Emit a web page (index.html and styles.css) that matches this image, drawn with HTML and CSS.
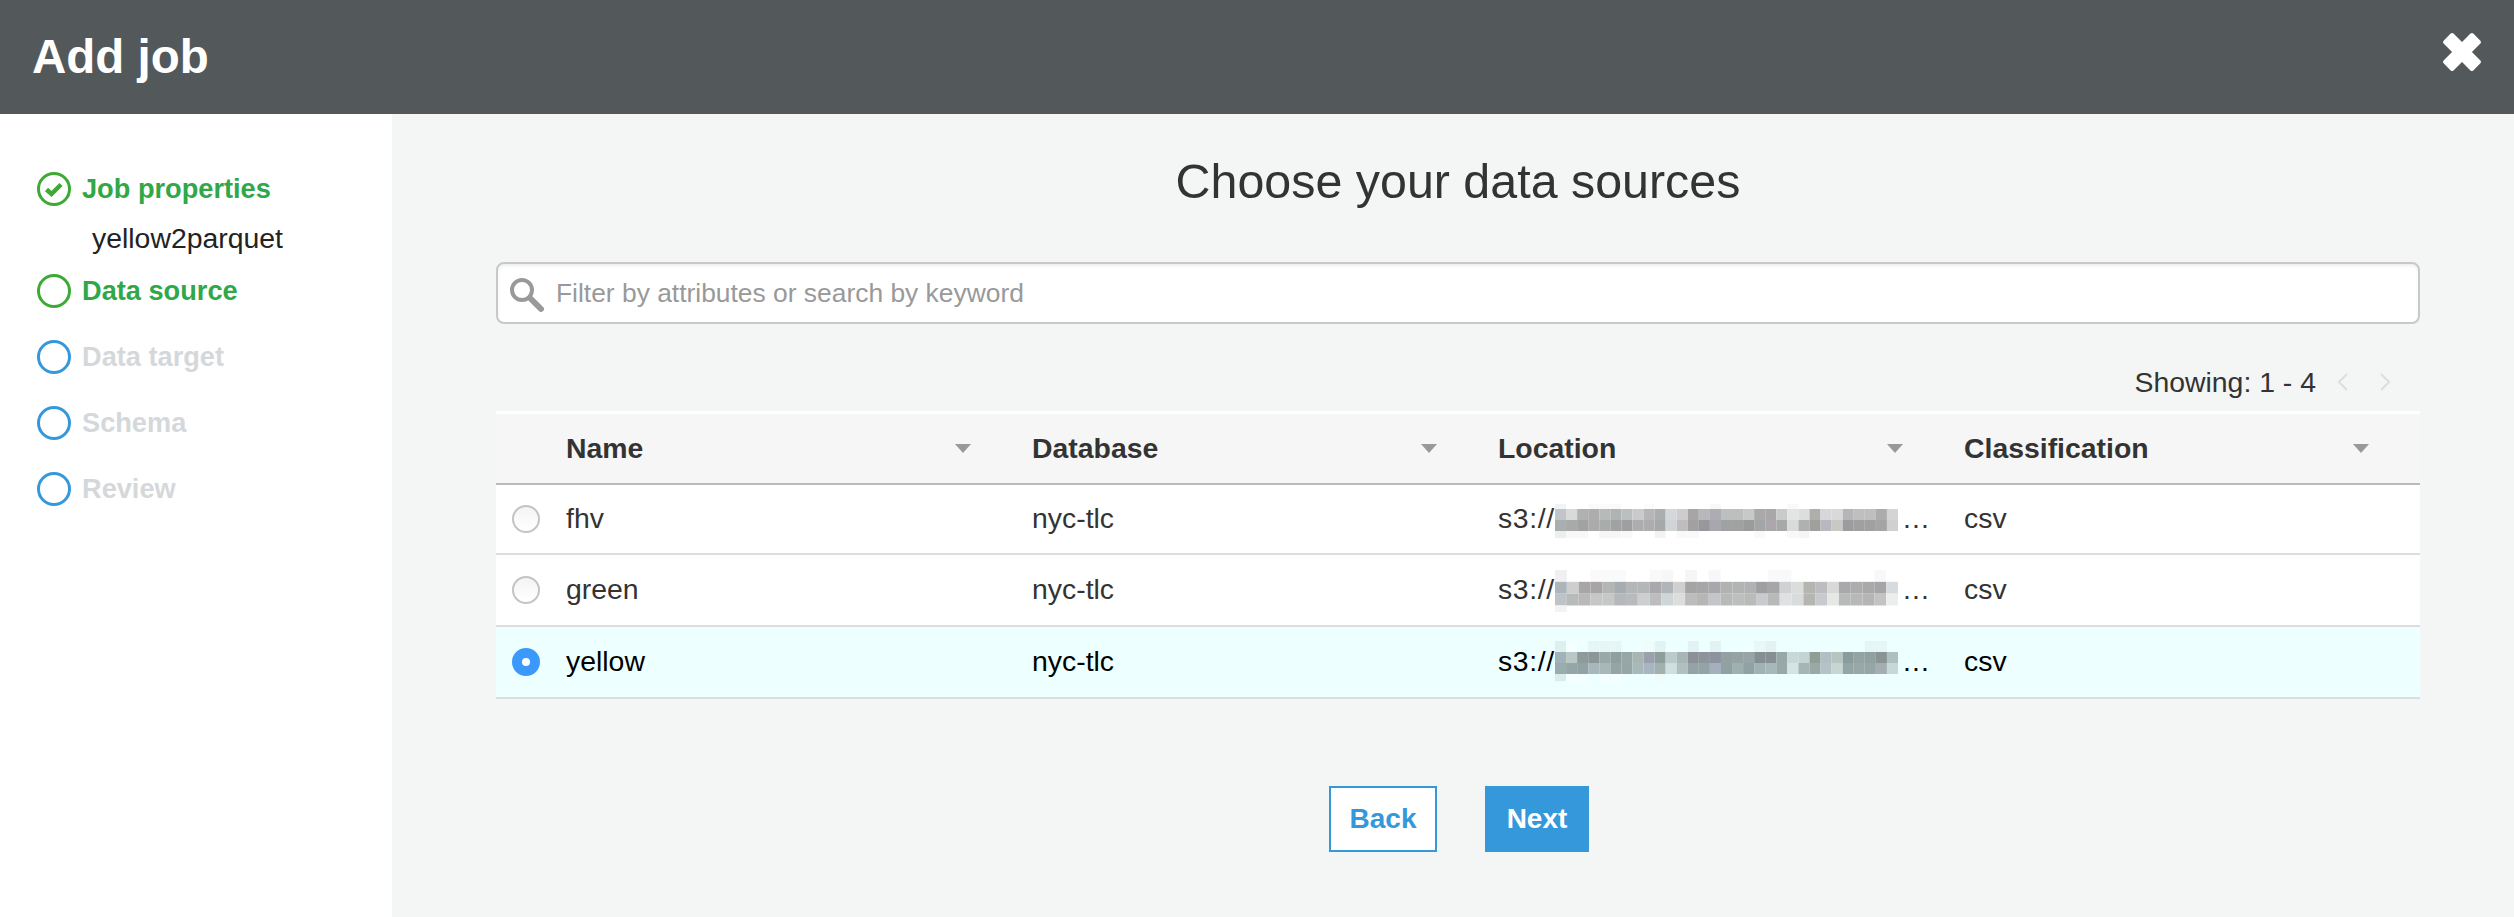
FILE: index.html
```html
<!DOCTYPE html>
<html lang="en">
<head>
    <meta charset="UTF-8">
    <title>Add job</title>
    <link rel="stylesheet" href="styles.css">
</head>
<body>

<header class="topbar">
    <h1>Add job</h1>
    <svg class="close-icon" width="38" height="38" viewBox="0 0 38 38">
        <rect x="-2" y="12" width="42" height="14" rx="2" transform="rotate(45 19 19)"/>
        <rect x="-2" y="12" width="42" height="14" rx="2" transform="rotate(-45 19 19)"/>
    </svg>
</header>

<div class="layout">
    <nav class="sidebar">
        <div class="step step-done">
            <svg class="step-icon" width="34" height="34" viewBox="0 0 34 34">
                <circle cx="17" cy="17" r="15.5"/>
                <path class="check" d="M9.5 17.5l5 4.5 9.5-9.5"/>
            </svg>
            <span class="step-name">Job properties</span>
        </div>
        <div class="step-value">yellow2parquet</div>
        <div class="step step-done">
            <svg class="step-icon" width="34" height="34" viewBox="0 0 34 34"><circle cx="17" cy="17" r="15.5"/></svg>
            <span class="step-name">Data source</span>
        </div>
        <div class="step">
            <svg class="step-icon" width="34" height="34" viewBox="0 0 34 34"><circle cx="17" cy="17" r="15.5"/></svg>
            <span class="step-name">Data target</span>
        </div>
        <div class="step">
            <svg class="step-icon" width="34" height="34" viewBox="0 0 34 34"><circle cx="17" cy="17" r="15.5"/></svg>
            <span class="step-name">Schema</span>
        </div>
        <div class="step">
            <svg class="step-icon" width="34" height="34" viewBox="0 0 34 34"><circle cx="17" cy="17" r="15.5"/></svg>
            <span class="step-name">Review</span>
        </div>
    </nav>

    <main class="content">
        <h2>Choose your data sources</h2>

        <div class="search">
            <svg class="search-icon" width="36" height="36" viewBox="0 0 36 36">
                <circle cx="13" cy="12" r="10"/>
                <path d="M21 20l11 11"/>
            </svg>
            <input type="text" placeholder="Filter by attributes or search by keyword">
        </div>

        <div class="pager">
            <span>Showing: 1 - 4</span>
            <svg class="pager-icon" width="11" height="18" viewBox="0 0 11 18"><path d="M10 1L2 9l8 8"/></svg>
            <svg class="pager-icon" width="11" height="18" viewBox="0 0 11 18"><path d="M1 1l8 8-8 8"/></svg>
        </div>

        <table class="sources">
            <thead>
                <tr>
                    <th class="col-radio"></th>
                    <th class="col-wide"><div class="head">Name<i class="sort"></i></div></th>
                    <th class="col-wide"><div class="head">Database<i class="sort"></i></div></th>
                    <th class="col-wide"><div class="head">Location<i class="sort"></i></div></th>
                    <th><div class="head">Classification<i class="sort"></i></div></th>
                </tr>
            </thead>
            <tbody>
                <tr>
                    <td><span class="radio"></span></td>
                    <td>fhv</td>
                    <td>nyc-tlc</td>
                    <td>
                        <div class="location">s3://<svg class="blur" viewBox="0 -1 31 4" width="343" height="44" preserveAspectRatio="none">
                            <rect x="0" y="-.45" fill="#f3f3f3"/><rect x="3" y="-.45" fill="#fafafa"/><rect x="4" y="-.45" fill="#fafafa"/><rect x="5" y="-.45" fill="#fafafa"/><rect x="8" y="-.45" fill="#fbfbfb"/><rect x="14" y="-.45" fill="#f8f8f8"/><rect x="21" y="-.45" fill="#f9f9f9"/>
                            <rect x="0" y="0" fill="#bfc5c8"/><rect x="1" y="0" fill="#d8d9d8"/><rect x="2" y="0" fill="#b0b1b2"/><rect x="3" y="0" fill="#aeadae"/><rect x="4" y="0" fill="#b8bab9"/><rect x="5" y="0" fill="#aeb3b4"/><rect x="6" y="0" fill="#bcbfc0"/><rect x="7" y="0" fill="#c8cacc"/><rect x="8" y="0" fill="#b6b5b7"/><rect x="9" y="0" fill="#abaeae"/><rect x="10" y="0" fill="#d3d8da"/><rect x="11" y="0" fill="#cdcdcb"/><rect x="12" y="0" fill="#a7a5a6"/><rect x="13" y="0" fill="#b8b8bb"/><rect x="14" y="0" fill="#aeacb3"/><rect x="15" y="0" fill="#bcbfbf"/><rect x="16" y="0" fill="#bdbebd"/><rect x="17" y="0" fill="#c8c8c8"/><rect x="18" y="0" fill="#a9a9aa"/><rect x="19" y="0" fill="#a8a8a8"/><rect x="20" y="0" fill="#c9cacc"/><rect x="21" y="0" fill="#e3e4e3"/><rect x="22" y="0" fill="#dcdddd"/><rect x="23" y="0" fill="#b0aeac"/><rect x="24" y="0" fill="#d7d7db"/><rect x="25" y="0" fill="#d9d9d7"/><rect x="26" y="0" fill="#b5b6b8"/><rect x="27" y="0" fill="#bfbfbf"/><rect x="28" y="0" fill="#bfbfbf"/><rect x="29" y="0" fill="#acacac"/><rect x="30" y="0" fill="#d4d4d6"/>
                            <rect x="0" y="1" fill="#a9aeb0"/><rect x="1" y="1" fill="#a8aaa9"/><rect x="2" y="1" fill="#a0a3a3"/><rect x="3" y="1" fill="#acabac"/><rect x="4" y="1" fill="#a9acab"/><rect x="5" y="1" fill="#a0a2a4"/><rect x="6" y="1" fill="#9d9fa1"/><rect x="7" y="1" fill="#adadb0"/><rect x="8" y="1" fill="#aeacae"/><rect x="9" y="1" fill="#a6a9a9"/><rect x="10" y="1" fill="#d0d4d6"/><rect x="11" y="1" fill="#bdbebd"/><rect x="12" y="1" fill="#a2a0a1"/><rect x="13" y="1" fill="#97989b"/><rect x="14" y="1" fill="#a8a6ae"/><rect x="15" y="1" fill="#9ea2a2"/><rect x="16" y="1" fill="#a0a2a0"/><rect x="17" y="1" fill="#9a9c9c"/><rect x="18" y="1" fill="#a3a5a8"/><rect x="19" y="1" fill="#aba7ab"/><rect x="20" y="1" fill="#a6a9a8"/><rect x="21" y="1" fill="#d9dada"/><rect x="22" y="1" fill="#b0b0ae"/><rect x="23" y="1" fill="#9f9f9c"/><rect x="24" y="1" fill="#b8b8c0"/><rect x="25" y="1" fill="#c8c8c4"/><rect x="26" y="1" fill="#9c9c9f"/><rect x="27" y="1" fill="#a0a0a0"/><rect x="28" y="1" fill="#a0a0a0"/><rect x="29" y="1" fill="#a5a5a5"/><rect x="30" y="1" fill="#d0d0d0"/>
                            <rect class="low" x="0" y="2" fill="#eeeeee"/><rect class="low" x="1" y="2" fill="#f8f8f8"/><rect class="low" x="2" y="2" fill="#f8f8f8"/><rect class="low" x="4" y="2" fill="#f6f6f6"/><rect class="low" x="5" y="2" fill="#f6f6f6"/><rect class="low" x="6" y="2" fill="#f8f8f8"/><rect class="low" x="9" y="2" fill="#f3f3f3"/><rect class="low" x="11" y="2" fill="#f9f9f9"/><rect class="low" x="12" y="2" fill="#f9f9f9"/><rect class="low" x="18" y="2" fill="#f9f9f9"/><rect class="low" x="21" y="2" fill="#f8f8f8"/><rect class="low" x="22" y="2" fill="#f5f5f5"/>
                        </svg><span class="dots">…</span></div>
                    </td>
                    <td>csv</td>
                </tr>
                <tr>
                    <td><span class="radio"></span></td>
                    <td>green</td>
                    <td>nyc-tlc</td>
                    <td>
                        <div class="location">s3://<svg class="blur" viewBox="0 -1 29 3.55" width="343" height="42" preserveAspectRatio="none">
                            <rect x="0" y="-1" fill="#f0f0f0"/><rect x="3" y="-1" fill="#fafafa"/><rect x="4" y="-1" fill="#fafafa"/><rect x="5" y="-1" fill="#fafafa"/><rect x="8" y="-1" fill="#f9f9f9"/><rect x="9" y="-1" fill="#f7f7f7"/><rect x="11" y="-1" fill="#f5f5f5"/><rect x="13" y="-1" fill="#f7f7f7"/><rect x="18" y="-1" fill="#f9f9f9"/><rect x="19" y="-1" fill="#f9f9f9"/><rect x="27" y="-1" fill="#f8f8f8"/>
                            <rect x="0" y="0" fill="#aeb5ba"/><rect x="1" y="0" fill="#cdcfcd"/><rect x="2" y="0" fill="#a8a6a7"/><rect x="3" y="0" fill="#a7a5a5"/><rect x="4" y="0" fill="#b3b6b5"/><rect x="5" y="0" fill="#a6adb0"/><rect x="6" y="0" fill="#b3b7b8"/><rect x="7" y="0" fill="#b5b6b8"/><rect x="8" y="0" fill="#a9a8ab"/><rect x="9" y="0" fill="#afb5b8"/><rect x="10" y="0" fill="#d0d0d0"/><rect x="11" y="0" fill="#a5a3a5"/><rect x="12" y="0" fill="#a6a5a8"/><rect x="13" y="0" fill="#a8a7ac"/><rect x="14" y="0" fill="#b1b3b3"/><rect x="15" y="0" fill="#b2b4b4"/><rect x="16" y="0" fill="#b0b2b3"/><rect x="17" y="0" fill="#9f9fa1"/><rect x="18" y="0" fill="#a5a6a8"/><rect x="19" y="0" fill="#cfd1d3"/><rect x="20" y="0" fill="#dbdddc"/><rect x="21" y="0" fill="#b3b5ae"/><rect x="22" y="0" fill="#bcbdc1"/><rect x="23" y="0" fill="#d8d9d8"/><rect x="24" y="0" fill="#a9a9ac"/><rect x="25" y="0" fill="#aeacae"/><rect x="26" y="0" fill="#aaa9aa"/><rect x="27" y="0" fill="#a5a5a7"/><rect x="28" y="0" fill="#d8dbde"/>
                            <rect x="0" y="1" fill="#bdc3c6"/><rect x="1" y="1" fill="#b8bbbb"/><rect x="2" y="1" fill="#b8b9b8"/><rect x="3" y="1" fill="#c6c7c6"/><rect x="4" y="1" fill="#c6c8c6"/><rect x="5" y="1" fill="#b5b8ba"/><rect x="6" y="1" fill="#b8bbbc"/><rect x="7" y="1" fill="#cdced0"/><rect x="8" y="1" fill="#bdbcbe"/><rect x="9" y="1" fill="#cfd6d8"/><rect x="10" y="1" fill="#dcdedd"/><rect x="11" y="1" fill="#bcbcba"/><rect x="12" y="1" fill="#b5b6b5"/><rect x="13" y="1" fill="#c3c5c8"/><rect x="14" y="1" fill="#b8bab9"/><rect x="15" y="1" fill="#bcbfbe"/><rect x="16" y="1" fill="#b8bbb9"/><rect x="17" y="1" fill="#c8cbce"/><rect x="18" y="1" fill="#b8bab8"/><rect x="19" y="1" fill="#dfe1e3"/><rect x="20" y="1" fill="#d9dcdc"/><rect x="21" y="1" fill="#b5b6b2"/><rect x="22" y="1" fill="#c8c9cd"/><rect x="23" y="1" fill="#e6e8e6"/><rect x="24" y="1" fill="#b8b9b9"/><rect x="25" y="1" fill="#b8b8b8"/><rect x="26" y="1" fill="#b5b5b5"/><rect x="27" y="1" fill="#c2c3c2"/><rect x="28" y="1" fill="#eceeee"/>
                            <rect class="low" x="0" y="2" fill="#f3f3f3"/>
                        </svg><span class="dots">…</span></div>
                    </td>
                    <td>csv</td>
                </tr>
                <tr class="selected">
                    <td><span class="radio radio-on"></span></td>
                    <td>yellow</td>
                    <td>nyc-tlc</td>
                    <td>
                        <div class="location">s3://<svg class="blur" viewBox="0 -1 31 4" width="343" height="44" preserveAspectRatio="none">
                            <rect x="0" y="-1" fill="#dfefef"/><rect x="1" y="-1" fill="#f5ffff"/><rect x="3" y="-1" fill="#e6f6f6"/><rect x="4" y="-1" fill="#e6f6f6"/><rect x="5" y="-1" fill="#e6f6f6"/><rect x="8" y="-1" fill="#eefcfc"/><rect x="9" y="-1" fill="#e3f3f3"/><rect x="12" y="-1" fill="#e3f3f3"/><rect x="14" y="-1" fill="#e3f3f3"/><rect x="18" y="-1" fill="#e8f8f8"/><rect x="19" y="-1" fill="#e3f3f3"/><rect x="28" y="-1" fill="#e6f6f6"/><rect x="29" y="-1" fill="#e6f6f6"/>
                            <rect x="0" y="0" fill="#9fb3b8"/><rect x="1" y="0" fill="#b9c8c5"/><rect x="2" y="0" fill="#8f9b9b"/><rect x="3" y="0" fill="#8c9697"/><rect x="4" y="0" fill="#9aa9a8"/><rect x="5" y="0" fill="#8f9e9e"/><rect x="6" y="0" fill="#97a7a7"/><rect x="7" y="0" fill="#a9b5b5"/><rect x="8" y="0" fill="#9aa0ac"/><rect x="9" y="0" fill="#8e9e9c"/><rect x="10" y="0" fill="#bccaca"/><rect x="11" y="0" fill="#aab5b8"/><rect x="12" y="0" fill="#8b9196"/><rect x="13" y="0" fill="#8e949c"/><rect x="14" y="0" fill="#8d929e"/><rect x="15" y="0" fill="#94a1a3"/><rect x="16" y="0" fill="#95a3a5"/><rect x="17" y="0" fill="#98a5a6"/><rect x="18" y="0" fill="#858e90"/><rect x="19" y="0" fill="#868f91"/><rect x="20" y="0" fill="#98a8a8"/><rect x="21" y="0" fill="#c7d8d8"/><rect x="22" y="0" fill="#c4d4d4"/><rect x="23" y="0" fill="#909e95"/><rect x="24" y="0" fill="#b0c0c4"/><rect x="25" y="0" fill="#b8c4c0"/><rect x="26" y="0" fill="#8b9c9e"/><rect x="27" y="0" fill="#95a3a3"/><rect x="28" y="0" fill="#91a0a0"/><rect x="29" y="0" fill="#8a9494"/><rect x="30" y="0" fill="#b0bfc0"/>
                            <rect x="0" y="1" fill="#9bacae"/><rect x="1" y="1" fill="#95a6a6"/><rect x="2" y="1" fill="#93a2a2"/><rect x="3" y="1" fill="#a8b7bb"/><rect x="4" y="1" fill="#a8b8b6"/><rect x="5" y="1" fill="#95a5a5"/><rect x="6" y="1" fill="#96a6a6"/><rect x="7" y="1" fill="#a9b8b8"/><rect x="8" y="1" fill="#aab5c3"/><rect x="9" y="1" fill="#a0b1b0"/><rect x="10" y="1" fill="#cfdfde"/><rect x="11" y="1" fill="#b2bfbf"/><rect x="12" y="1" fill="#95a3a6"/><rect x="13" y="1" fill="#94a3a5"/><rect x="14" y="1" fill="#a5b0bf"/><rect x="15" y="1" fill="#90a1a2"/><rect x="16" y="1" fill="#9fb0af"/><rect x="17" y="1" fill="#90a2a2"/><rect x="18" y="1" fill="#a1b2b4"/><rect x="19" y="1" fill="#a8b7ba"/><rect x="20" y="1" fill="#98a8a8"/><rect x="21" y="1" fill="#d3e4e2"/><rect x="22" y="1" fill="#a5b5b3"/><rect x="23" y="1" fill="#9aa9a6"/><rect x="24" y="1" fill="#b5c2c8"/><rect x="25" y="1" fill="#c7d6d3"/><rect x="26" y="1" fill="#94a5a5"/><rect x="27" y="1" fill="#97a8a6"/><rect x="28" y="1" fill="#95a6a4"/><rect x="29" y="1" fill="#a3adb2"/><rect x="30" y="1" fill="#c8d8d8"/>
                            <rect class="low" x="0" y="2" fill="#dcecec"/><rect class="low" x="1" y="2" fill="#f5ffff"/><rect class="low" x="2" y="2" fill="#f5ffff"/><rect class="low" x="4" y="2" fill="#f5ffff"/><rect class="low" x="5" y="2" fill="#f5ffff"/><rect class="low" x="9" y="2" fill="#f0fcfc"/>
                        </svg><span class="dots">…</span></div>
                    </td>
                    <td>csv</td>
                </tr>
            </tbody>
        </table>

        <div class="actions">
            <button class="btn btn-back">Back</button>
            <button class="btn btn-next">Next</button>
        </div>
    </main>
</div>

</body>
</html>
```

FILE: styles.css
```css
* {
    box-sizing: border-box;
}
html, body {
    height: 100%;
}
body {
    margin: 0;
    display: flex;
    flex-direction: column;
    font-family: "Liberation Sans", Arial, sans-serif;
    color: #333;
    background-color: #f4f6f6;
    overflow: hidden;
}

/* top bar */
.topbar {
    flex: none;
    height: 114px;
    padding: 0 33px 2px 32px;
    display: flex;
    align-items: center;
    justify-content: space-between;
    background-color: #53595b;
}
.topbar h1 {
    margin: 0;
    font-size: 47.5px;
    font-weight: bold;
    color: #fff;
}
.close-icon {
    fill: #fff;
    overflow: visible;
    margin-top: -8px;
}

.layout {
    flex: 1;
    display: flex;
}

/* left steps */
.sidebar {
    flex: none;
    width: 392px;
    padding: 58px 0 0 37px;
    background-color: #fff;
}
.step {
    height: 34px;
    margin-bottom: 32px;
    display: flex;
    align-items: center;
    font-size: 27.2px;
    font-weight: bold;
    color: #d5d8da;
}
.step-icon {
    flex: none;
    margin-right: 11px;
    fill: none;
    stroke: #3498db;
    stroke-width: 3;
}
.step-done {
    color: #30a84a;
}
.step-done .step-icon {
    stroke: #3caa35;
}
.check {
    stroke-width: 4.5;
}
.step-done:first-child {
    margin-bottom: 0;
}
.step-value {
    height: 68px;
    padding-left: 55px;
    line-height: 64px;
    font-size: 28.4px;
    color: #222;
}

/* main column */
.content {
    flex: 1;
    padding: 39px 94px 0 104px;
}
.content h2 {
    margin: 0 0 53px;
    height: 56px;
    line-height: 56px;
    text-align: center;
    font-size: 48.4px;
    font-weight: normal;
    color: #333;
}

.search {
    position: relative;
    height: 62px;
}
.search input {
    width: 100%;
    height: 100%;
    padding: 0 0 0 58px;
    border: 2px solid #c8c8c8;
    border-radius: 8px;
    outline: none;
    background-color: #fff;
    box-shadow: inset 0 2px 3px #eee;
    font-family: inherit;
    font-size: 26.4px;
}
.search input::placeholder {
    color: #999;
    opacity: 1;
}
.search-icon {
    position: absolute;
    left: 13px;
    top: 16px;
    fill: none;
    stroke: #999;
    stroke-width: 4;
}
.search-icon path {
    stroke-width: 6;
    stroke-linecap: round;
}

.pager {
    height: 32px;
    margin: 42px 0 13px;
    padding-right: 29px;
    display: flex;
    align-items: center;
    justify-content: flex-end;
    gap: 21px;
    font-size: 28.4px;
    color: #333;
}
.pager-icon {
    fill: none;
    stroke: #ddd;
    stroke-width: 2;
}
.pager-icon + .pager-icon {
    margin-left: 11px;
}

/* table */
.sources {
    width: 100%;
    table-layout: fixed;
    border-collapse: separate;
    border-spacing: 0;
    font-size: 28.4px;
}
.col-radio {
    width: 70px;
}
.col-wide {
    width: 466px;
}
.sources th {
    height: 74px;
    padding: 0;
    border-top: 3px solid #fff;
    border-bottom: 2px solid #bbb;
    background-color: #f6f6f6;
    text-align: left;
    font-weight: bold;
}
.sources td {
    height: 72px;
    padding: 0 0 2px;
    border-bottom: 2px solid #ddd;
    background-color: #fff;
}
.sources tbody tr:first-child td {
    height: 70px;
}
.sources tr.selected td {
    background-color: #eeffff;
    color: #000;
}
.head {
    width: 405px;
    display: flex;
    align-items: center;
    justify-content: space-between;
}
.sort {
    width: 0;
    height: 0;
    border-left: 8px solid transparent;
    border-right: 8px solid transparent;
    border-top: 9px solid #999;
}

.radio {
    display: block;
    width: 28px;
    height: 28px;
    margin: 2px 0 0 16px;
    border: 2px solid #c4c4c4;
    border-radius: 50%;
    background: linear-gradient(#f4f4f4, #fff);
}
.radio-on {
    border: 10px solid #3b99fc;
    background: #fff;
}

.location {
    display: flex;
    align-items: center;
    height: 44px;
    letter-spacing: .6px;
}
.blur {
    flex: none;
    margin-top: 4px;
}
.blur rect {
    width: 1px;
    height: 1px;
}
.blur rect.low {
    height: .65px;
}
.dots {
    margin-left: 4px;
    letter-spacing: 0;
}

/* buttons */
.actions {
    margin-top: 87px;
    padding-left: 2px;
    display: flex;
    justify-content: center;
    gap: 48px;
}
.btn {
    height: 66px;
    padding: 0;
    border: 2px solid #3498db;
    border-radius: 0;
    font-family: inherit;
    font-size: 28px;
    font-weight: bold;
}
.btn-back {
    width: 108px;
    background-color: #fff;
    color: #3498db;
}
.btn-next {
    width: 104px;
    background-color: #3498db;
    color: #fff;
}
```
